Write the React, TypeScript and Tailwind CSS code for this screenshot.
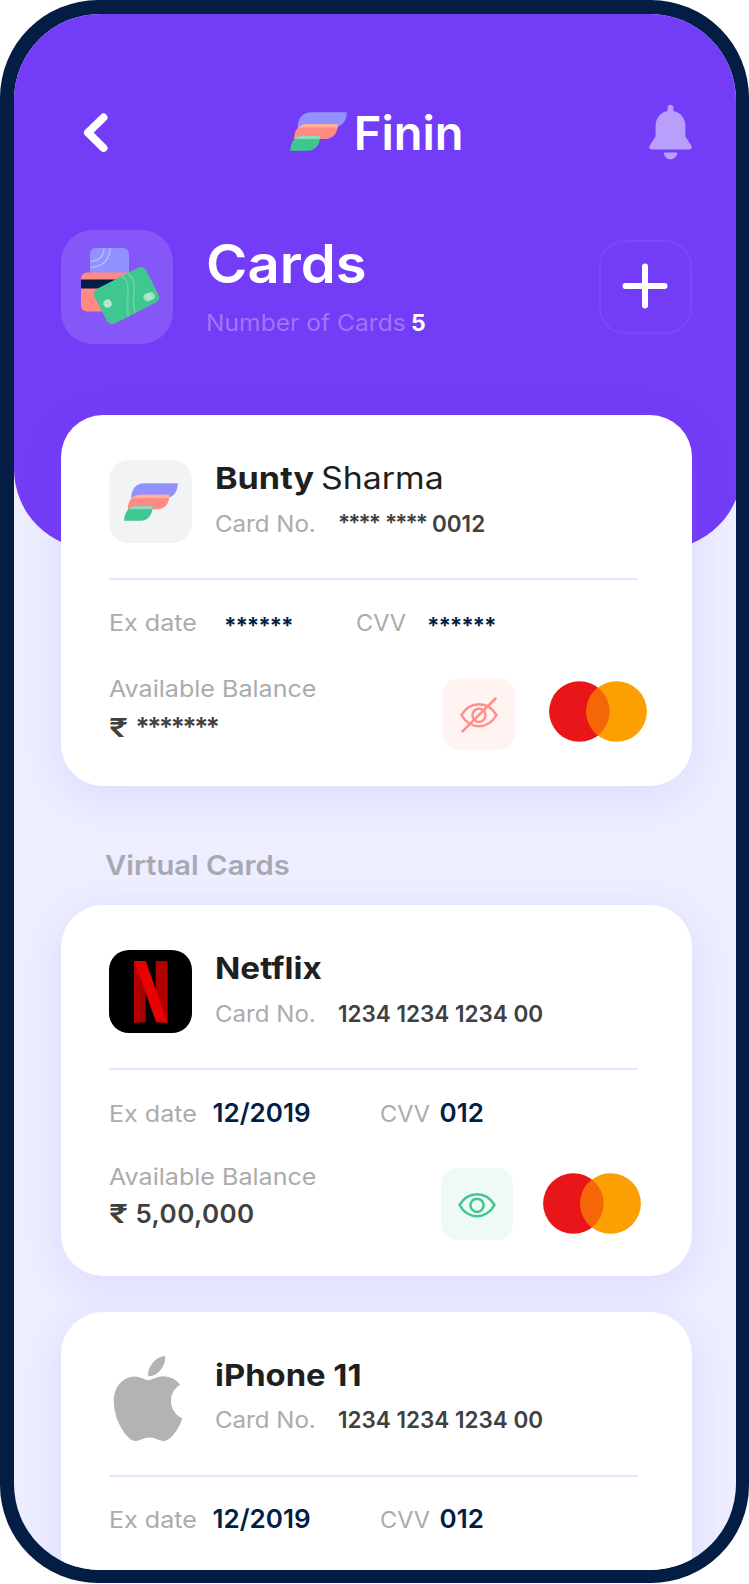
import type { ReactNode } from "react";
import { FaApple } from "react-icons/fa";

function FininMark({ className }: { className: string }) {
  return (
    <svg viewBox="0 0 57 39" preserveAspectRatio="none" className={className}>
      <path d="M7.6 15.4C7.6 7 12 .2 21.5 .2H56.8C56.8 8.6 52 15.4 43.5 15.4Z" fill="#9192ff" />
      <path d="M4 27C4 18.6 8.6 12 17.5 12H48C48 20.4 43.5 27 35 27Z" fill="#ff8a84" />
      <path d="M8 15.6C10 13.3 13.2 12 17.5 12H48L47.6 15.6Z" fill="#ffb09b" />
      <path d="M.2 38.8C.2 30.4 5 23.6 14 23.6H30.2C30.2 32 26 38.8 17.5 38.8Z" fill="#40c790" />
      <path d="M4.4 27C6.7 24.8 9.9 23.6 14 23.6H30.2L29.9 27Z" fill="#92d8bd" />
    </svg>
  );
}

function CardsArt() {
  return (
    <svg viewBox="0 0 80 78" className="ml-[8px] w-20 h-[78px]">
      <rect x="9" y="0" width="39" height="30" rx="6" fill="#9192ff" />
      <g fill="none" stroke="#b5b5ff" strokeWidth="1.6">
        <path d="M23 .5C23 8 18 13 9.5 13" />
        <path d="M29 .5C29 12 21 19 9.5 19" />
      </g>
      <rect x="0" y="24.500" width="56" height="39" rx="6" fill="#ff8a84" />
      <rect x="0" y="31.500" width="52" height="9" fill="#031d44" />
      <g transform="translate(45.500 47.600) rotate(-27)">
        <rect x="-29" y="-19.500" width="58" height="39" rx="6" fill="#40c790" />
        <g fill="none" stroke="#66d2a6" strokeWidth="1.700">
          <path d="M5 -19.500C8 -14 6 -7 2 -1S-5 11 -8 19.500" />
          <path d="M11 -19.500C15 -14 13 -7 9 -1S1 11 0 19.500" />
        </g>
        <circle cx="-20.500" cy="-1.500" r="4.100" fill="#b4e8d2" />
        <circle cx="18" cy="11" r="4" fill="#a4e3c8" />
        <circle cx="21.500" cy="11.500" r="4" fill="#b9ead5" fillOpacity=".75" />
      </g>
    </svg>
  );
}

function NetflixLogo() {
  return (
    <div className="w-[83.5px] h-[83px] rounded-[20px] bg-black flex justify-center items-center">
      <svg viewBox="0 0 34 62" preserveAspectRatio="none" className="ml-[1px] w-[33.5px] h-[62px]">
        <defs>
          <linearGradient id="fold" x1="0" y1="0" x2="1" y2="0">
            <stop offset="0" stopColor="#b80000" />
            <stop offset="1" stopColor="#a00000" />
          </linearGradient>
        </defs>
        <path d="M0 0H12V61.200C8 61.300 4 61.600 0 62Z" fill="url(#fold)" />
        <path d="M22 0H34V62L22 42Z" fill="#b20000" />
        <path d="M0 0H12L34 62C30 61.500 26.500 61.300 22.500 61.200Z" fill="#e90000" />
      </svg>
    </div>
  );
}

function Mastercard({ className }: { className: string }) {
  return (
    <svg viewBox="0 0 98 61" className={className}>
      <circle cx="30.400" cy="30.500" r="30.300" fill="#e81618" />
      <circle cx="67.600" cy="30.500" r="30.300" fill="#fb9f03" />
      <path d="M49 6.600A30.300 30.300 0 0 1 49 54.400A30.300 30.300 0 0 1 49 6.600Z" fill="#f46608" />
    </svg>
  );
}

function Eye({ off }: { off: boolean }) {
  return (
    <svg
      viewBox="0 0 38 36"
      className="mt-[2px] ml-[1px] w-[38px] h-9"
      fill="none"
      stroke={off ? "#ff8f8a" : "#40c790"}
      strokeWidth="2.500"
      strokeLinecap="round"
      strokeLinejoin="round"
    >
      <path d="M1.500 18C5.500 11.500 11.500 7.300 19 7.300S32.500 11.500 36.500 18C32.500 25 26.500 29.200 19 29.200S5.500 25 1.500 18Z" />
      <circle cx="19" cy="18.300" r="6.600" />
      {off && <path d="M2.500 34.300L35.500 1.500" />}
    </svg>
  );
}

function Wide({ className, children }: { className: string; children: ReactNode }) {
  return <span className={`inline-block origin-left whitespace-nowrap ${className}`}>{children}</span>;
}

type CardProps = {
  logo: ReactNode;
  name: ReactNode;
  number: ReactNode;
  hidden?: boolean;
  showBalance?: boolean;
};

function Card({ logo, name, number, hidden = false, showBalance = true }: CardProps) {
  return (
    <section className="ml-[47px] w-[631.5px] h-[371px] shrink-0 rounded-[42px] bg-white pt-[45px] pl-12 shadow-[0_10px_40px_rgba(100,95,255,0.13)]">
      <div className="flex h-[83.5px]">
        <div className="w-[83.500px] shrink-0">{logo}</div>
        <div className="ml-[22.5px]">
          <h2 className="flex h-9 text-[30.5px] leading-9 font-bold text-[#1f1f1f]">{name}</h2>
          <div className="mt-[9.8px] flex text-[22.5px] leading-9">
            <span className="w-[123.5px] text-[#ababab]">
              <Wide className="scale-x-[1.07]">Card No.</Wide>
            </span>
            <span className={hidden ? "flex gap-[6px] font-semibold text-[#404040]" : "font-semibold text-[#404040]"}>{number}</span>
          </div>
        </div>
      </div>
      <div className="mt-[34.8px] h-[2px] w-[529.5px] bg-[#e6e6ff]" />
      <div className="mt-[26.7px] flex h-8 items-baseline text-[22.5px] leading-8 text-[#ababab]">
        {hidden ? (
          <>
            <span className="w-[115.5px]">
              <Wide className="scale-x-[1.115]">Ex date</Wide>
            </span>
            <span className="relative top-[3px] w-[132px] font-bold tracking-[-1.2px] text-[#031d44]">******</span>
            <span className="w-[71px]">
              <Wide className="scale-x-[1.045]">CVV</Wide>
            </span>
            <span className="relative top-[3px] font-bold tracking-[-1.2px] text-[#031d44]">******</span>
          </>
        ) : (
          <>
            <span className="w-[104px]">
              <Wide className="scale-x-[1.115]">Ex date</Wide>
            </span>
            <span className="w-[167px] text-[26px] font-semibold text-[#031d44]">12/2019</span>
            <span className="w-[60px]">
              <Wide className="scale-x-[1.045]">CVV</Wide>
            </span>
            <span className="text-[26px] font-semibold text-[#031d44]">012</span>
          </>
        )}
      </div>
      {showBalance && (
        <div className={hidden ? "mt-[35.2px] flex" : "mt-[33.2px] flex"}>
          <div className={hidden ? "w-[334.5px]" : "w-[332.5px]"}>
            <div className="flex text-[22.5px] leading-[30px] text-[#ababab]">
              <Wide className="scale-x-[1.115]">Available Balance</Wide>
            </div>
            <div
              className={
                hidden
                  ? "mt-[6px] flex text-[26px] leading-9 font-semibold text-[#404040]"
                  : "mt-[3.5px] flex text-[26px] leading-9 font-semibold text-[#404040]"
              }
            >
              <span className="w-[27px]">
                <Wide className="scale-x-[1.3]">₹</Wide>
              </span>
              <span className={hidden ? "relative -top-[1px] tracking-[-2.3px]" : "tracking-[0.4px]"}>{hidden ? "*******" : "5,00,000"}</span>
            </div>
          </div>
          <div
            className={
              hidden
                ? "mt-[4.2px] flex size-[71.5px] items-center justify-center rounded-2xl bg-[#fff4f2]"
                : "mt-[6px] flex size-[71.5px] items-center justify-center rounded-2xl bg-[#effaf7]"
            }
          >
            <Eye off={hidden} />
          </div>
          <Mastercard className={hidden ? "mt-[6.8px] ml-[34.5px] h-[61px] w-[98px]" : "mt-[11.2px] ml-[30px] h-[61px] w-[98px]"} />
        </div>
      )}
    </section>
  );
}

export default function App() {
  return (
    <div className="h-[1584px] w-[749px] bg-white font-['Inter','Noto_Sans',sans-serif]">
      <div className="h-[1583px] w-[749px] rounded-[98px] bg-[#031d44] p-[13.5px]">
        <div className="flex h-full flex-col overflow-hidden rounded-[86px] bg-[#edeeff]">
          <header className="h-[535px] w-[728px] shrink-0 rounded-b-[80px] bg-[#733cf6]">
            <div className="flex h-[146px] pt-[90px]">
              <svg viewBox="0 0 26 42" className="mt-2 ml-[69.5px] h-[42px] w-[26px]">
                <path d="M20.500 5.500L5 20.700L20.500 36" fill="none" stroke="#fff" strokeWidth="8" strokeLinecap="round" strokeLinejoin="round" />
              </svg>
              <FininMark className="mt-[8.5px] ml-[180.8px] h-[39px] w-[57px]" />
              <div className="mt-[1px] ml-[7px] w-[120px] text-[47px] leading-[56px] font-semibold text-white">Finin</div>
              <svg viewBox="0 0 43 56" className="ml-[175.5px] h-14 w-[43px]" fill="#b89ffb">
                <path d="M18.600 3.400C18.600 -.3 24.400 -.3 24.400 3.400V7C31.500 8.500 36.400 14 36.400 22V32.500L42.300 41.500C43.500 43.800 42.500 45.500 40 45.500H3C.5 45.500 -.5 43.800 .7 41.500L6.600 32.500V22C6.600 14 11.500 8.500 18.600 7Z" />
                <path d="M14.800 48.400H28.200C28.200 52.200 25.200 55.200 21.500 55.200S14.800 52.200 14.800 48.400Z" />
              </svg>
            </div>
            <div className="flex pt-[70px] pl-[47px]">
              <div className="flex h-[114px] w-[112.5px] shrink-0 items-center justify-center rounded-[32px] bg-[#8657f8]">
                <CardsArt />
              </div>
              <div className="ml-[32.5px] w-[393.5px] shrink-0">
                <h1 className="flex pt-[2px] text-[53px] leading-16 font-semibold text-white">
                  <Wide className="scale-x-[1.06]">Cards</Wide>
                </h1>
                <p className="mt-[11px] flex text-[23px] leading-8 text-[#9e76f9]">
                  <span className="w-[205.500px]">
                    <Wide className="scale-x-[1.07]">Number of Cards</Wide>
                  </span>
                  <span className="font-bold text-white">5</span>
                </p>
              </div>
              <div className="mt-[10px] flex h-[94px] w-[93px] shrink-0 items-center justify-center rounded-[26px] border-2 border-[#7b47f7]">
                <svg viewBox="0 0 46 46" className="-mt-[2px] -ml-[1px] size-[46px]">
                  <path d="M23 3.500V42.500M3.500 23H42.500" stroke="#fff" strokeWidth="6" strokeLinecap="round" />
                </svg>
              </div>
            </div>
          </header>
          <div className="-mt-[133.500px]">
            <Card
              hidden
              logo={
                <div className="flex h-[83px] items-center justify-center rounded-[20px] bg-[#f1f3f5]">
                  <FininMark className="ml-[1px] h-[38px] w-[54px]" />
                </div>
              }
              name={
                <>
                  <span className="w-[106px]">
                    <Wide className="scale-x-[1.12]">Bunty</Wide>
                  </span>
                  <Wide className="scale-x-[1.11] font-normal">Sharma</Wide>
                </>
              }
              number={
                <>
                  <span className="relative -top-[1px] tracking-[-1.9px]">****</span>
                  <span className="relative -top-[1px] tracking-[-1.9px]">****</span>
                  <span>0012</span>
                </>
              }
            />
          </div>
          <h3 className="mt-[62px] mb-[21px] ml-[91.5px] flex text-[27px] leading-9 font-semibold text-[#a8a8b2]">
            <Wide className="scale-x-[1.083]">Virtual Cards</Wide>
          </h3>
          <Card logo={<NetflixLogo />} name={<Wide className="scale-x-[1.09]">Netflix</Wide>} number="1234 1234 1234 00" />
          <div className="h-[35.5px] shrink-0" />
          <Card
            showBalance={false}
            logo={<FaApple preserveAspectRatio="none" className="-mt-[7px] ml-[4.5px] h-[97px] w-[70px] text-[#b3b3b3]" />}
            name={<Wide className="scale-x-[1.075]">iPhone 11</Wide>}
            number="1234 1234 1234 00"
          />
        </div>
      </div>
    </div>
  );
}
